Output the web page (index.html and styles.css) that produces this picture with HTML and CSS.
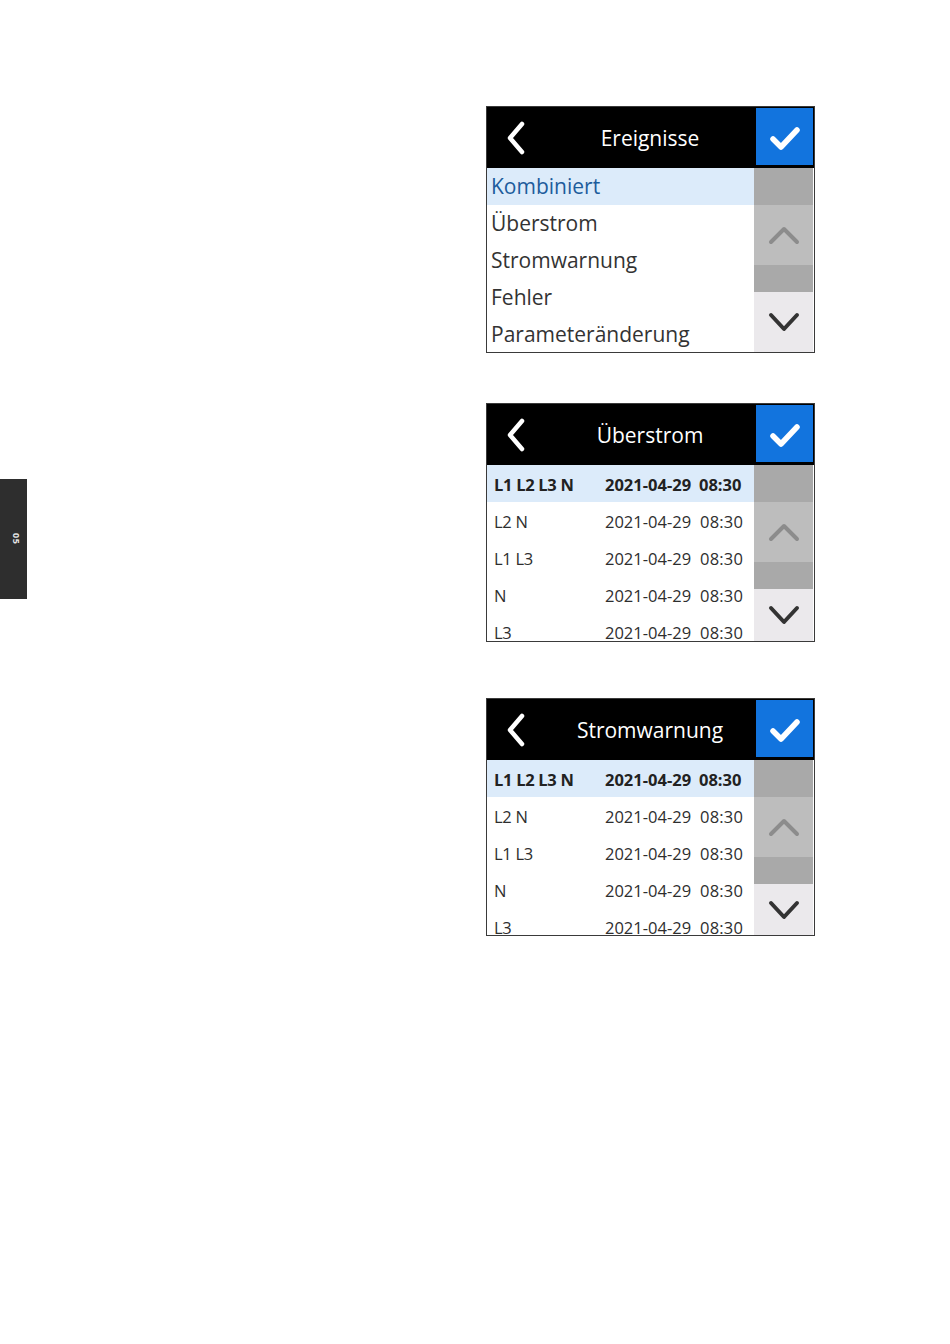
FILE: index.html
```html
<!DOCTYPE html>
<html lang="de">
<head>
  <meta charset="UTF-8" />
  <title>Ereignisse</title>
  <link rel="stylesheet" href="styles.css">
</head>
<body>
  <div class="page">

    <!-- Kapitelreiter -->
    <div class="tab"><span>05</span></div>

    <div class="screens">

      <!-- Ereignisse -->
      <div class="screen screen-menu">
        <div class="screen-head">
          <div class="back">
            <svg width="24" height="34" viewBox="0 0 24 34"><path d="M17 3 L5 17 L17 31" fill="none" stroke="#fff" stroke-width="4.5" stroke-linecap="round" stroke-linejoin="round"/></svg>
          </div>
          <div class="title">Ereignisse</div>
          <div class="ok">
            <svg width="32" height="26" viewBox="0 0 32 26"><path d="M4 13 L12 21 L28 4" fill="none" stroke="#fff" stroke-width="5.5" stroke-linecap="round" stroke-linejoin="round"/></svg>
          </div>
        </div>
        <div class="screen-body">
          <ul class="menu">
            <li class="active">Kombiniert</li>
            <li>Überstrom</li>
            <li>Stromwarnung</li>
            <li>Fehler</li>
            <li>Parameteränderung</li>
          </ul>
          <div class="scroll">
            <div class="track-top"></div>
            <div class="btn-up">
              <svg width="32" height="20" viewBox="0 0 32 20"><path d="M3 17 L16 4 L29 17" fill="none" stroke="#8c8c8c" stroke-width="4" stroke-linecap="round" stroke-linejoin="round"/></svg>
            </div>
            <div class="track-mid"></div>
            <div class="btn-down">
              <svg width="32" height="22" viewBox="0 0 32 22"><path d="M3 4 L16 18 L29 4" fill="none" stroke="#333" stroke-width="4" stroke-linecap="round" stroke-linejoin="round"/></svg>
            </div>
          </div>
        </div>
      </div>

      <!-- Überstrom -->
      <div class="screen screen-log first-log">
        <div class="screen-head">
          <div class="back">
            <svg width="24" height="34" viewBox="0 0 24 34"><path d="M17 3 L5 17 L17 31" fill="none" stroke="#fff" stroke-width="4.5" stroke-linecap="round" stroke-linejoin="round"/></svg>
          </div>
          <div class="title">Überstrom</div>
          <div class="ok">
            <svg width="32" height="26" viewBox="0 0 32 26"><path d="M4 13 L12 21 L28 4" fill="none" stroke="#fff" stroke-width="5.5" stroke-linecap="round" stroke-linejoin="round"/></svg>
          </div>
        </div>
        <div class="screen-body">
          <ul class="log">
            <li class="active"><span class="phase">L1 L2 L3 N</span><span class="date">2021-04-29</span><span class="time">08:30</span></li>
            <li><span class="phase">L2 N</span><span class="date">2021-04-29</span><span class="time">08:30</span></li>
            <li><span class="phase">L1 L3</span><span class="date">2021-04-29</span><span class="time">08:30</span></li>
            <li><span class="phase">N</span><span class="date">2021-04-29</span><span class="time">08:30</span></li>
            <li><span class="phase">L3</span><span class="date">2021-04-29</span><span class="time">08:30</span></li>
          </ul>
          <div class="scroll">
            <div class="track-top"></div>
            <div class="btn-up">
              <svg width="32" height="20" viewBox="0 0 32 20"><path d="M3 17 L16 4 L29 17" fill="none" stroke="#8c8c8c" stroke-width="4" stroke-linecap="round" stroke-linejoin="round"/></svg>
            </div>
            <div class="track-mid"></div>
            <div class="btn-down">
              <svg width="32" height="22" viewBox="0 0 32 22"><path d="M3 4 L16 18 L29 4" fill="none" stroke="#333" stroke-width="4" stroke-linecap="round" stroke-linejoin="round"/></svg>
            </div>
          </div>
        </div>
      </div>

      <!-- Stromwarnung -->
      <div class="screen screen-log">
        <div class="screen-head">
          <div class="back">
            <svg width="24" height="34" viewBox="0 0 24 34"><path d="M17 3 L5 17 L17 31" fill="none" stroke="#fff" stroke-width="4.5" stroke-linecap="round" stroke-linejoin="round"/></svg>
          </div>
          <div class="title">Stromwarnung</div>
          <div class="ok">
            <svg width="32" height="26" viewBox="0 0 32 26"><path d="M4 13 L12 21 L28 4" fill="none" stroke="#fff" stroke-width="5.5" stroke-linecap="round" stroke-linejoin="round"/></svg>
          </div>
        </div>
        <div class="screen-body">
          <ul class="log">
            <li class="active"><span class="phase">L1 L2 L3 N</span><span class="date">2021-04-29</span><span class="time">08:30</span></li>
            <li><span class="phase">L2 N</span><span class="date">2021-04-29</span><span class="time">08:30</span></li>
            <li><span class="phase">L1 L3</span><span class="date">2021-04-29</span><span class="time">08:30</span></li>
            <li><span class="phase">N</span><span class="date">2021-04-29</span><span class="time">08:30</span></li>
            <li><span class="phase">L3</span><span class="date">2021-04-29</span><span class="time">08:30</span></li>
          </ul>
          <div class="scroll">
            <div class="track-top"></div>
            <div class="btn-up">
              <svg width="32" height="20" viewBox="0 0 32 20"><path d="M3 17 L16 4 L29 17" fill="none" stroke="#8c8c8c" stroke-width="4" stroke-linecap="round" stroke-linejoin="round"/></svg>
            </div>
            <div class="track-mid"></div>
            <div class="btn-down">
              <svg width="32" height="22" viewBox="0 0 32 22"><path d="M3 4 L16 18 L29 4" fill="none" stroke="#333" stroke-width="4" stroke-linecap="round" stroke-linejoin="round"/></svg>
            </div>
          </div>
        </div>
      </div>

    </div>
  </div>
</body>
</html>
```

FILE: styles.css
```css
* {
  box-sizing: border-box;
}

body {
  margin: 0;
  padding: 0;
  background: #fff;
  font-family: 'Open Sans', 'DejaVu Sans', sans-serif;
  color: #333;
}

.page {
  display: flex;
  width: 950px;
  height: 1344px;
}

/* Kapitelreiter links */
.tab {
  width: 27px;
  height: 120px;
  margin-top: 479px;
  background: #2e2e2e;
  display: flex;
  align-items: center;
  justify-content: center;
  padding-left: 5px;
}

.tab span {
  writing-mode: vertical-rl;
  color: #e6e6e6;
  font-size: 9px;
  font-weight: 700;
  letter-spacing: 0.5px;
}

.screens {
  margin-left: 459px;
  padding-top: 106px;
  display: flex;
  flex-direction: column;
}

.screen {
  width: 329px;
  border: 1px solid #3a3a3a;
  background: #fff;
  overflow: hidden;
}

.screen + .screen {
  margin-top: 50px;
}

.screen-log + .screen-log {
  margin-top: 56px;
}

.screen-head {
  height: 61px;
  background: #000;
  display: grid;
  grid-template-columns: 57px 1fr 57px;
  padding: 1px 1px 3px 0;
}

.back {
  display: flex;
  align-items: center;
  justify-content: center;
  padding: 3px 0 0 2px;
}

.title {
  color: #fff;
  font-size: 21px;
  display: flex;
  align-items: center;
  justify-content: center;
  padding-top: 3px;
}

.ok {
  background: #1274de;
  display: flex;
  align-items: center;
  justify-content: center;
  padding-top: 4px;
}

.screen-body {
  display: flex;
  height: 184px;
}

.screen-log .screen-body {
  height: 175px;
}

.screen-log.first-log .screen-body {
  height: 176px;
}

/* Listen */
.menu, .log {
  flex: 1;
  list-style: none;
  margin: 0;
  padding: 0;
  overflow: hidden;
}

.menu li {
  height: 37px;
  line-height: 37px;
  font-size: 21px;
  padding: 0 0 0 4px;
  color: #333;
  white-space: nowrap;
}

.menu li.active {
  background: #dcebfa;
  color: #1d5c9c;
}

.log li {
  height: 37px;
  display: flex;
  align-items: center;
  font-size: 16.5px;
  padding: 2px 0 0 7px;
  color: #2e2e2e;
  white-space: nowrap;
}

.log li.active {
  background: #dcebfa;
  font-weight: 700;
  color: #222;
}

.log .phase {
  width: 111px;
  letter-spacing: -0.3px;
}

.log .date {
  width: 95px;
}

.log .time {
  letter-spacing: 0.2px;
}

.log li.active .date {
  width: 94px;
}

.log li.active .time {
  letter-spacing: 0;
}

/* Scrollleiste */
.scroll {
  width: 59px;
  margin-right: 1px;
  display: flex;
  flex-direction: column;
  background: #a9a9a9;
}

.track-top {
  height: 37px;
}

.btn-up {
  height: 60px;
  background: #bdbdbd;
  display: flex;
  align-items: center;
  justify-content: center;
}

.track-mid {
  height: 27px;
}

.btn-down {
  flex: 1;
  background: #ebe9ec;
  display: flex;
  align-items: center;
  justify-content: center;
}
```
